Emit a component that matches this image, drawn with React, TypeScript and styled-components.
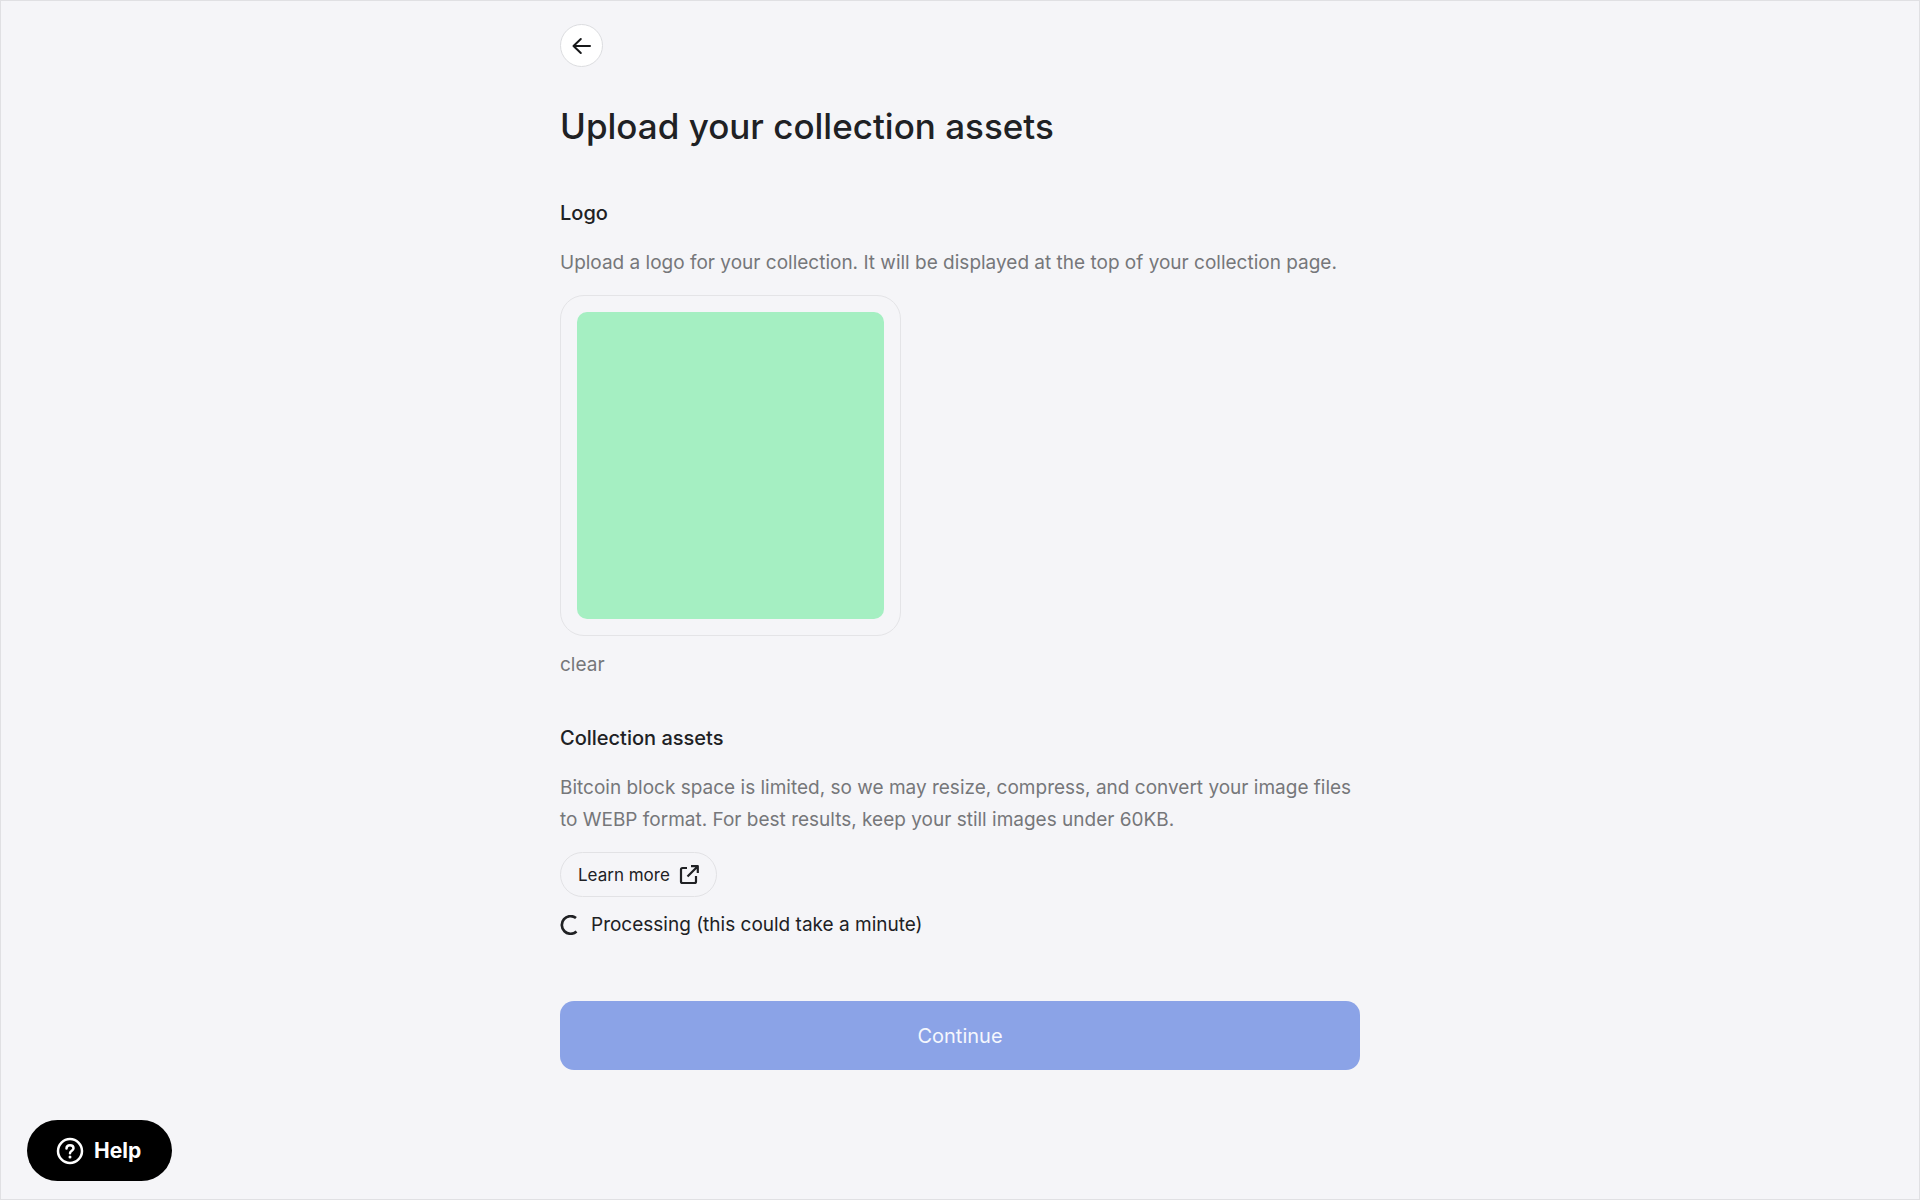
import React from "react";
import styled, { createGlobalStyle } from "styled-components";

const GlobalStyle = createGlobalStyle`
  * { box-sizing: border-box; }
  body {
    margin: 0;
    background: #f5f5f8;
    color: #202124;
    font-family: Inter, "Liberation Sans", sans-serif;
  }
  h1, h2, p { margin: 0; }
  button { font-family: inherit; cursor: pointer; }
`;

const Page = styled.div`
  min-height: 100vh;
  padding: 23px 24px 96px;
  border: 1px solid #e0e0e3;
`;

const Content = styled.main`
  max-width: 800px;
  margin: 0 auto;
  display: flex;
  flex-direction: column;
  align-items: flex-start;
`;

const BackButton = styled.button`
  width: 43px;
  height: 43px;
  padding: 0;
  display: grid;
  place-items: center;
  border: 1px solid #dcdde0;
  border-radius: 50%;
  background: #fff;
  color: #17181a;
`;

const Title = styled.h1`
  margin-top: 35px;
  font-size: 35px;
  line-height: 48px;
  font-weight: 500;
`;

const Section = styled.section<{ $top: number }>`
  width: 100%;
  margin-top: ${(p) => p.$top}px;
  display: flex;
  flex-direction: column;
  align-items: flex-start;
  gap: 16px;
`;

const Heading = styled.h2`
  font-size: 20px;
  line-height: 35px;
  font-weight: 500;
`;

const Text = styled.p`
  font-size: 19px;
  line-height: 32px;
  color: #76777a;
`;

const Preview = styled.div`
  width: 341px;
  max-width: 100%;
  aspect-ratio: 1;
  padding: 16px;
  border: 1px solid #e4e4e7;
  border-radius: 24px;
`;

const Swatch = styled.div`
  height: 100%;
  border-radius: 10px;
  background: #a5efc2;
`;

const ClearButton = styled.button`
  margin-top: -3px;
  padding: 0;
  border: 0;
  background: none;
  font-size: 19px;
  line-height: 32px;
  color: #76777a;
`;

const LearnMore = styled.a`
  height: 45px;
  padding: 0 16px 0 17px;
  display: inline-flex;
  align-items: center;
  gap: 8px;
  border: 1px solid #e2e2e5;
  border-radius: 23px;
  font-size: 17px;
  line-height: 24px;
  color: #202124;
  text-decoration: none;
`;

const Status = styled.p`
  margin-top: -4px;
  display: flex;
  align-items: center;
  gap: 12px;
  font-size: 19px;
  line-height: 32px;
`;

const Continue = styled.button`
  width: 100%;
  height: 69px;
  margin-top: 60px;
  border: 0;
  border-radius: 14px;
  background: #8ba3e7;
  color: #f5f7fd;
  font-size: 20px;
  line-height: 32px;
`;

const Help = styled.button`
  position: fixed;
  left: 27px;
  bottom: 19px;
  height: 61px;
  padding: 0 31px 0 29px;
  display: flex;
  align-items: center;
  gap: 10px;
  border: 0;
  border-radius: 31px;
  background: #000;
  color: #fff;
  font-size: 21px;
  font-weight: 700;
`;

export default function App() {
  return (
    <Page>
      <GlobalStyle />
      <Content>
        <BackButton type="button" aria-label="Back">
          <svg width="20" height="20" viewBox="0 0 20 20" fill="none" stroke="currentColor" strokeWidth="2" strokeLinecap="round" strokeLinejoin="round" aria-hidden="true">
            <path d="M18 10H1.500M8.800 3L1.500 10L8.800 17" />
          </svg>
        </BackButton>
        <Title>Upload your collection assets</Title>

        <Section $top={46}>
          <Heading>Logo</Heading>
          <Text>Upload a logo for your collection. It will be displayed at the top of your collection page.</Text>
          <Preview>
            <Swatch />
          </Preview>
          <ClearButton type="button">clear</ClearButton>
        </Section>

        <Section $top={40}>
          <Heading>Collection assets</Heading>
          <Text>
            Bitcoin block space is limited, so we may resize, compress, and convert your image files to WEBP format. For
            best results, keep your still images under 60KB.
          </Text>
          <LearnMore href="#learn-more">
            Learn more
            <svg width="22" height="22" viewBox="0 0 22 22" fill="none" stroke="currentColor" strokeWidth="2.200" strokeLinejoin="round" aria-hidden="true">
              <path d="M9 4H4.500Q3 4 3 5.500V17.500Q3 19 4.500 19H16.500Q18 19 18 17.500V12" />
              <path d="M13 2.200H19.800V9M19.800 2.200L9.500 12.500" />
            </svg>
          </LearnMore>
          <Status role="status">
            <svg width="19" height="20" viewBox="0 0 19 20" fill="none" stroke="currentColor" strokeWidth="2.700" aria-hidden="true">
              <path d="M16 3A8.800 8.800 0 1 0 16.500 16.500" />
            </svg>
            Processing (this could take a minute)
          </Status>
        </Section>

        <Continue type="button">Continue</Continue>
      </Content>

      <Help type="button">
        <svg width="28" height="28" viewBox="0 0 28 28" fill="none" stroke="currentColor" strokeWidth="2.500" strokeLinecap="round" aria-hidden="true">
          <circle cx="14" cy="14" r="12" />
          <path d="M10.500 11.500C10.500 9.300 12 8.200 14 8.200S17.500 9.500 17.500 11.300C17.500 13.700 14 13.800 14 16.300" />
          <circle cx="14" cy="20" r="1.500" fill="currentColor" stroke="none" />
        </svg>
        Help
      </Help>
    </Page>
  );
}
